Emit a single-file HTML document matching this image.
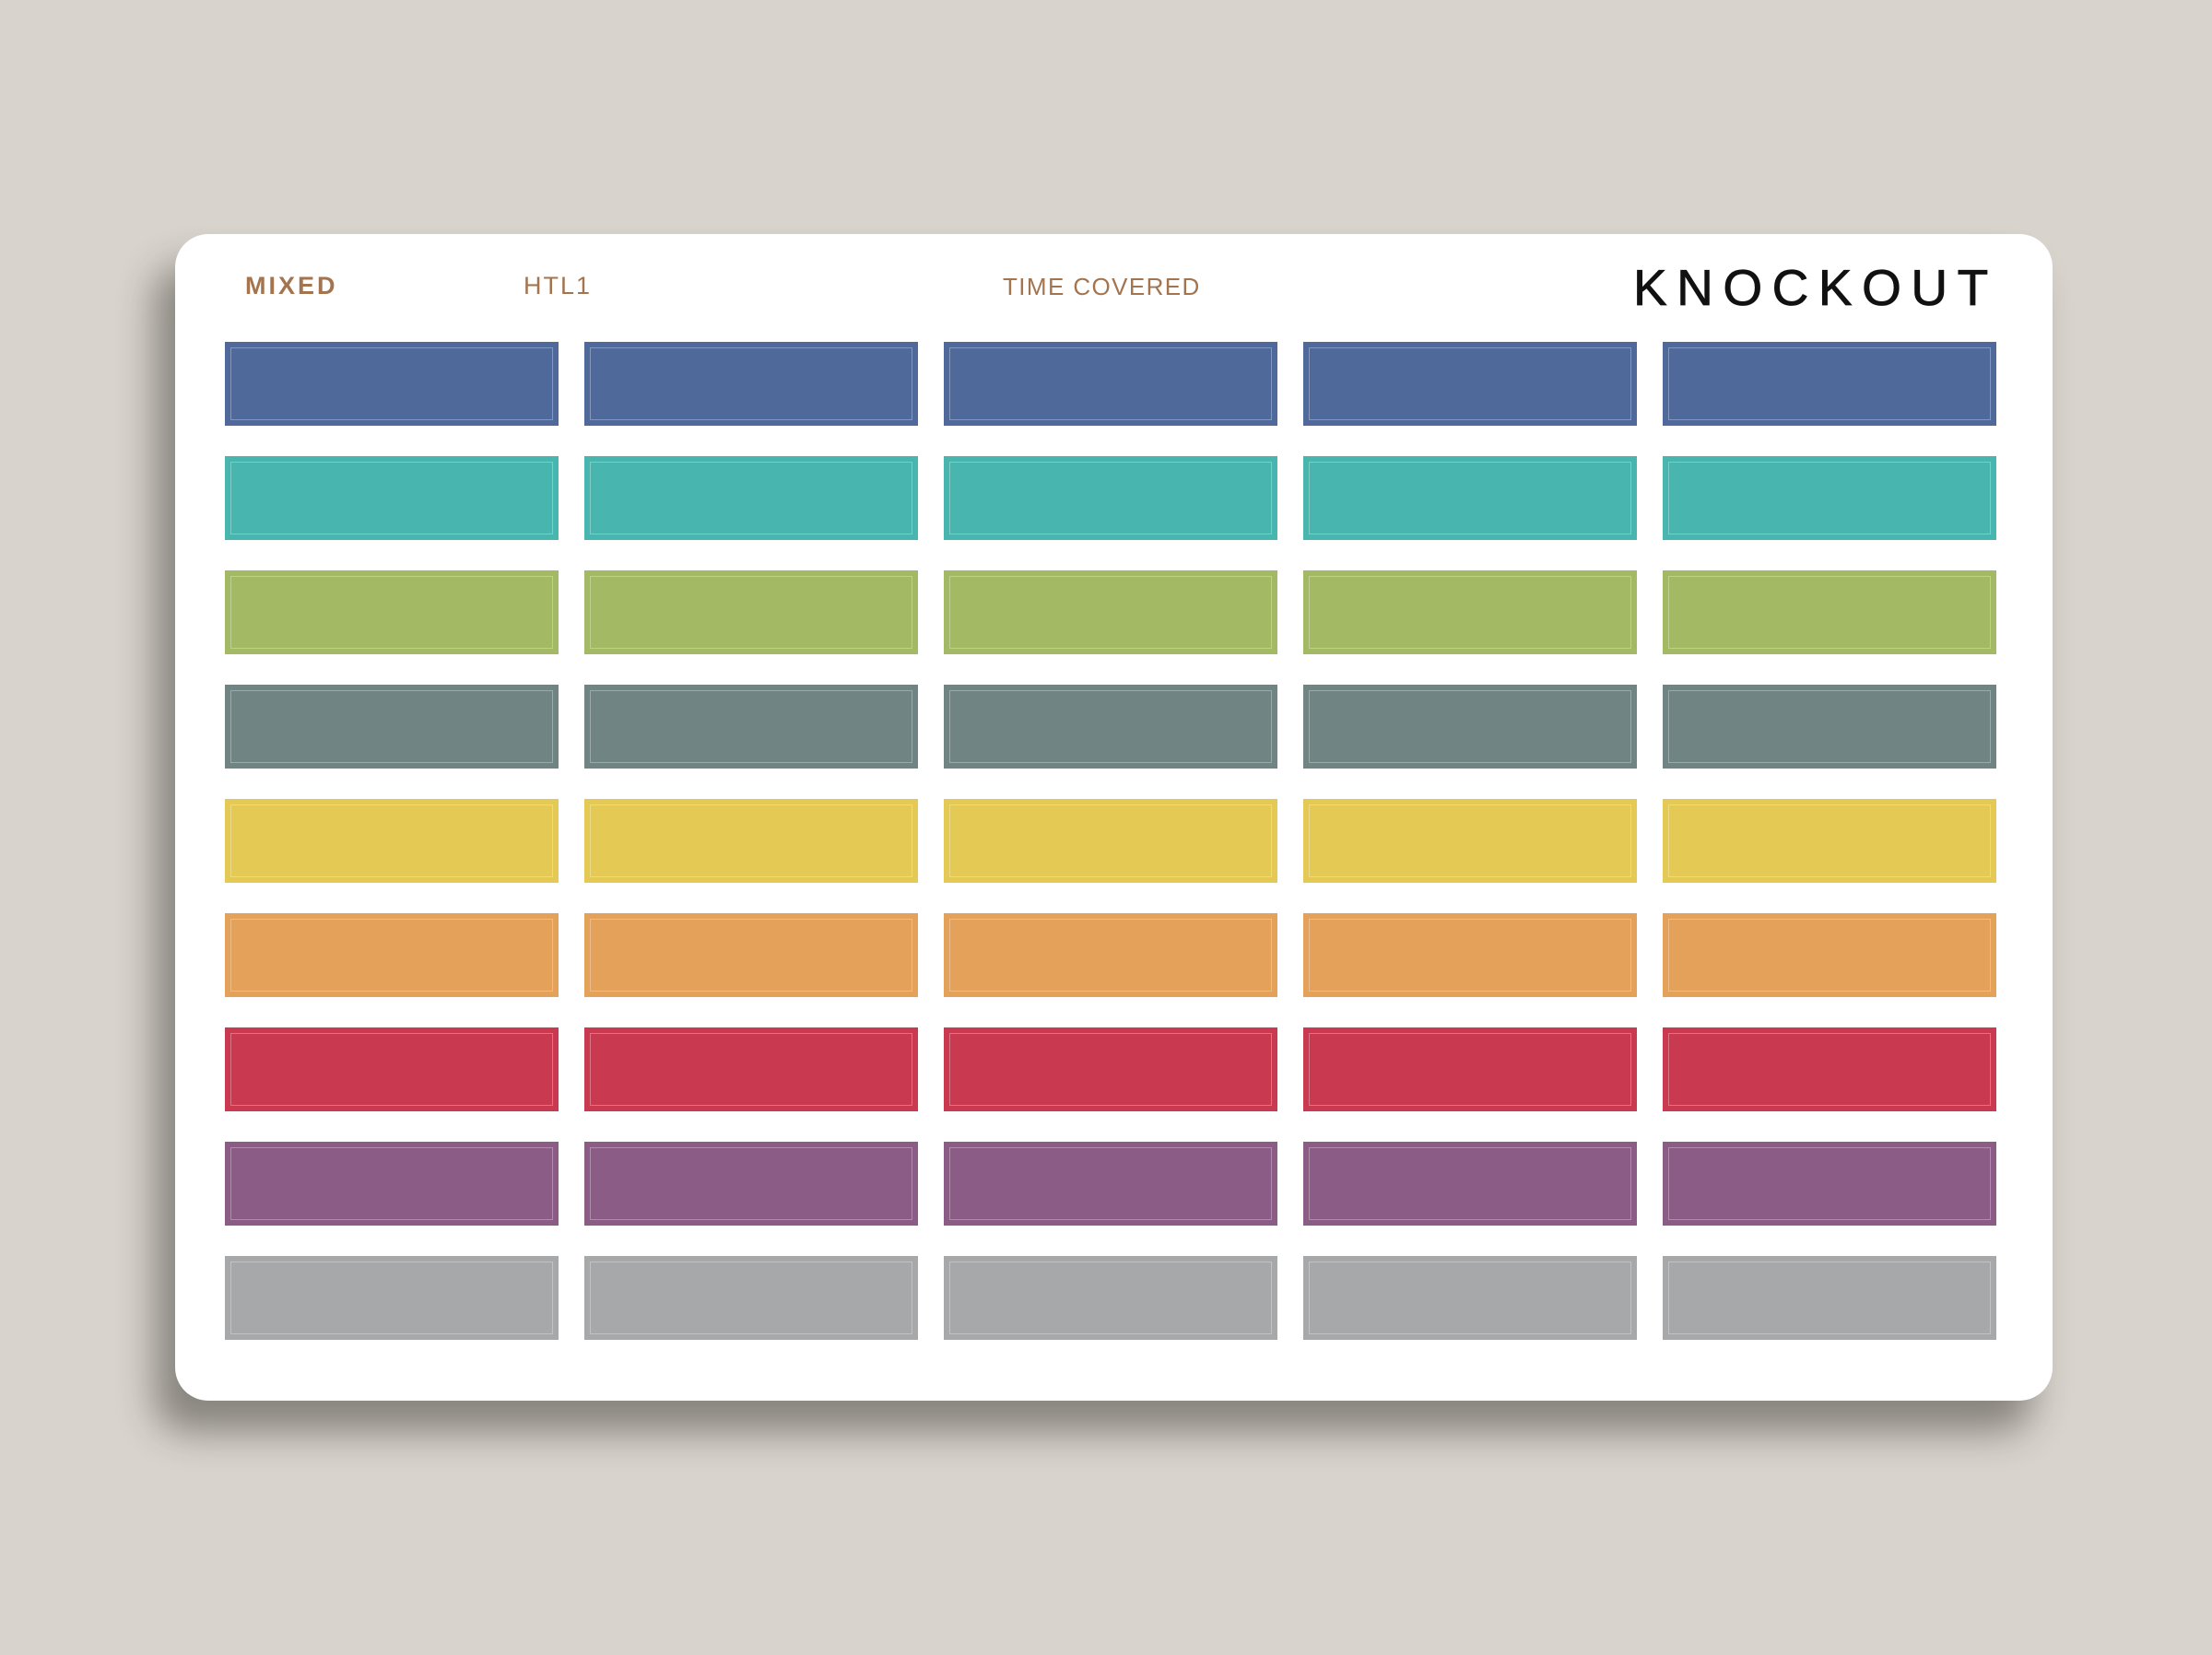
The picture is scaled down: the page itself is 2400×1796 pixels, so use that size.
<!DOCTYPE html>
<html><head><style>
html,body{margin:0;padding:0}
body{width:2400px;height:1796px;background:#d8d3cc;position:relative;overflow:hidden;font-family:"Liberation Sans",sans-serif}
.card{position:absolute;left:190px;top:254px;width:2037px;height:1266px;background:#fff;border-radius:36px;box-shadow:-22px 34px 40px rgba(40,38,34,0.45)}
.t{position:absolute;color:#a4744f;white-space:nowrap}
.b{position:absolute;width:362px;height:91px;box-sizing:border-box}
.b::after{content:"";position:absolute;left:6px;top:6px;right:6px;bottom:6px;border:1.5px solid rgba(255,255,255,0.3)}
</style></head><body>
<div class="card"></div>
<div class="t" style="left:266px;top:295px;font-size:27px;font-weight:bold;letter-spacing:3px">MIXED</div>
<div class="t" style="left:568px;top:295px;font-size:27px;letter-spacing:2px">HTL1</div>
<div class="t" style="left:1088px;top:296px;font-size:26px;letter-spacing:1.4px">TIME COVERED</div>
<div class="t" style="left:1772px;top:280px;font-size:55px;color:#111;letter-spacing:10.5px;-webkit-text-stroke:0.8px #111">KNOCKOUT</div>
<div id="g"></div>
<script>
var c=["#50699b","#48b5ae","#a4b964","#708484","#e4ca54","#e4a15a","#c93a50","#8a5c86","#a7a8a9"];
var h="";
for(var r=0;r<9;r++)for(var k=0;k<5;k++){h+='<div class="b" style="left:'+(244+k*390)+'px;top:'+(371+r*124)+'px;background:'+c[r]+'"></div>';}
document.getElementById("g").innerHTML=h;
</script>
</body></html>
